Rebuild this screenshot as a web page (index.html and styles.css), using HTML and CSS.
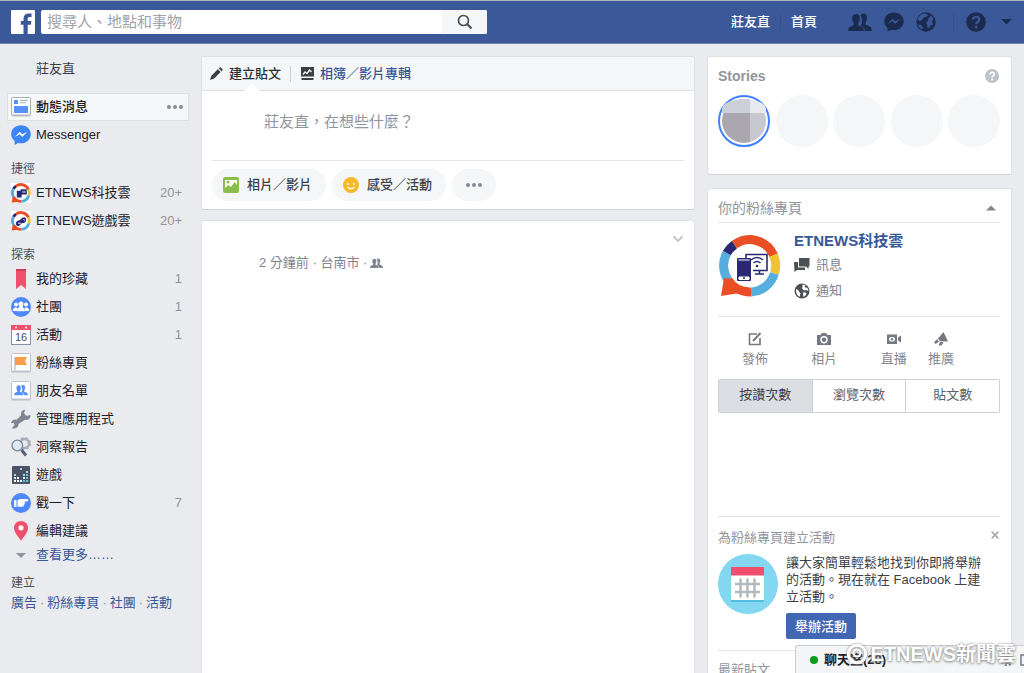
FILE: index.html
```
<!DOCTYPE html>
<html lang="zh-Hant">
<head>
<meta charset="utf-8">
<title>Facebook</title>
<link rel="stylesheet" href="styles.css">
</head>
<body>
<svg class="defs" aria-hidden="true">
  <symbol id="friends" viewBox="0 0 24 18">
    <path d="M15.500.5c2.600 0 3.600 2 3.500 4.600-.1 2.200-.8 3.600-1.500 4.400v2.100c1.500.9 5.100 1.700 5.800 3.200.3.700.4 2.100.4 3.200H17c-.2-3-1.600-4-4-5 .8-1.400 1.100-3.200 1.100-5.400 0-2-.6-3.700-1.500-4.800.6-1.500 1.400-2.300 2.900-2.300z"/>
    <path d="M8 1c2.800 0 3.900 2 3.800 4.800-.1 2.200-.8 3.600-1.600 4.400v2c1.500.8 4.600 1.500 5.200 2.900.3.700.3 1.800.3 2.900H.3c0-1.100 0-2.200.3-2.900.6-1.400 3.700-2.100 5.200-2.900v-2C5 9.400 4.300 8 4.200 5.800 4.100 3 5.200 1 8 1z"/>
  </symbol>
  <symbol id="etlogo" viewBox="0 0 62 62">
    <g fill="none" stroke-width="9">
      <path d="M15.400 9.700A26 26 0 0 1 54.600 20.200" stroke="#e94e25"/>
      <path d="M54.600 20.200A26 26 0 0 1 55.400 38.500" stroke="#f0c335"/>
      <path d="M55.400 38.500A26 26 0 0 1 32 57" stroke="#55aede"/>
      <path d="M32 57A26 26 0 0 1 9 45" stroke="#e94e25"/>
      <path d="M9 45A26 26 0 0 1 7.800 18" stroke="#55aede"/>
      <path d="M7.800 18A26 26 0 0 1 15.400 9.700" stroke="#2b2873"/>
    </g>
    <path d="M5 43l8 1 8 14-19 3z" fill="#e94e25"/>
  </symbol>
</svg>

<header class="topbar">
  <a class="logo" href="#" aria-label="Facebook"><svg viewBox="0 0 24 24"><rect width="24" height="24" rx="1" fill="#fff"/><path d="M12.500 24v-9.200H9.800V11h2.700V8.700c0-3.300 2-5.200 5-5.200H20.500V7h-1.800c-1.600 0-2 .8-2 2v2h3.700l-.5 3.800h-3.200V24z" fill="#3b5998"/></svg></a>
  <form class="search">
    <input type="text" aria-label="搜尋" placeholder="搜尋人、地點和事物">
    <button type="button" aria-label="搜尋"><svg width="16" height="16" viewBox="0 0 16 16" fill="none" stroke="#4b4f56"><circle cx="6.500" cy="6.500" r="5" stroke-width="1.700"/><path d="M10.300 10.300L14.500 14.500" stroke-width="2.200"/></svg></button>
  </form>
  <nav class="topnav">
    <a href="#">莊友直</a><span class="sep"></span><a href="#">首頁</a>
    <div class="topicons">
      <button aria-label="交友邀請"><svg width="24" height="18"><use href="#friends"/></svg></button>
      <button aria-label="訊息"><svg width="20" height="20" viewBox="0 0 20 20"><path d="M10 .5C4.500.5.3 4.300.3 9.300c0 2.800 1.200 5 3.200 6.600v3.700l3.100-1.900c1 .3 2.200.5 3.400.5 5.500 0 9.700-3.900 9.700-8.900S15.500.5 10 .5z"/><path d="M3.800 11.800L8.600 6.700l2.600 2.500 4.900-2.500-4.800 5.200-2.700-2.600z" fill="#3b5998"/></svg></button>
      <button aria-label="通知"><svg width="20" height="20" viewBox="0 0 20 20"><circle cx="10" cy="10" r="9.700"/><path d="M1.500 7C3 3.500 6 1.500 9 1.500L12.500 3 10 5 7.500 5.500 6 8 3.500 9zM15 3.500l2.500 3-1.500 3 1 3-2.500 1-1.500 2.500-2-.5.500-3-1.500-1.500 2-2 .5-2.500zM2 12.500l3 .5 2 2-1 2.500c-2-1-3.400-2.800-4-5z" fill="#3b5998"/></svg></button>
    </div>
    <span class="sep"></span>
    <button aria-label="說明"><svg width="20" height="20" viewBox="0 0 20 20"><circle cx="10" cy="10" r="9.800"/><path d="M7 7.700c0-4 6.200-3.800 6.200 0 0 2.300-3 2-3 4.300" fill="none" stroke="#3b5998" stroke-width="2.200"/><circle cx="10.200" cy="15" r="1.400" fill="#3b5998"/></svg></button>
    <button aria-label="帳號設定"><svg width="11" height="7" viewBox="0 0 12 8"><path d="M0 1h12L6 7.500z"/></svg></button>
  </nav>
</header>

<div class="page">
  <nav class="sidebar">
    <a class="row profile" href="#">莊友直</a>
    <div class="row active">
      <svg class="ico" viewBox="0 0 20 20"><path d="M.5 3v15.500q0 1 1 1h17q1 0 1-1V3z" fill="#bcc1c9"/><rect x=".5" y=".5" width="19" height="17.500" rx="1" fill="#fff" stroke="#a9afb9"/><rect x="3" y="3" width="4" height="4" fill="#5890ff"/><path d="M9 3.500h8M9 5.800h6" stroke="#aab0ba"/><rect x="3" y="9" width="14" height="7" fill="#5890ff"/></svg>
      <a href="#">動態消息</a><button class="dots" aria-label="更多選項"><i></i><i></i><i></i></button>
    </div>
    <a class="row" href="#"><svg class="ico" viewBox="0 0 20 20"><path d="M10 .3C4.500.3.200 4.100.200 9.200c0 3 1.300 5 3.400 6.700v4l3.300-1.900 3.100.3c5.500 0 9.800-4.100 9.800-9.100S15.500.3 10 .3z" fill="#3d84f7"/><path d="M3.800 11.900L8.700 6.700l2.600 2.500 4.900-2.500-4.900 5.200-2.600-2.600z" fill="#fff"/></svg>Messenger</a>

    <h2>捷徑</h2>
    <a class="row" href="#"><svg class="ico" viewBox="0 0 62 62"><path d="M0 0h62v62H0z" fill="#fff"/><use href="#etlogo"/><path d="M18 24h15v21H18zM30 19h19v17H30z" fill="#2b2873"/><path d="M35 24h10v7H35z" fill="#8b89b8"/></svg>ETNEWS科技雲<span class="num">20+</span></a>
    <a class="row" href="#"><svg class="ico" viewBox="0 0 62 62"><path d="M0 0h62v62H0z" fill="#fff"/><use href="#etlogo"/><path d="M16 43c-3-7 3-14 11-14l8-8c7-5 14 0 12 8-1 6-7 10-14 9l-6 6c-4 4-9 4-11-1z" fill="#2b2873"/><path d="M22 38h8M38 26l5 3" stroke="#fff" stroke-width="3"/></svg>ETNEWS遊戲雲<span class="num">20+</span></a>

    <h2>探索</h2>
    <a class="row" href="#"><svg class="ico" viewBox="0 0 20 20"><path d="M5 0h10v20l-5-4-5 4z" fill="#f0506e"/><path d="M5 0h10v2H5z" fill="#cf3f5b"/></svg>我的珍藏<span class="num">1</span></a>
    <a class="row" href="#"><svg class="ico" viewBox="0 0 20 20"><circle cx="10" cy="10" r="10" fill="#4f89f9"/><g fill="#fff"><circle cx="5" cy="7.500" r="2"/><circle cx="15" cy="7.500" r="2"/><path d="M1.800 14q0-3.500 3.200-3.500 1.200 0 1.700 1-.9.900-.9 2.500zM18.200 14q0-3.500-3.200-3.500-1.200 0-1.700 1 .9.900.9 2.500z"/><path d="M10 4.500c3.400 0 2.700 4 1.500 5 0 1.700 2.500 1 2.500 4.700H6c0-3.700 2.500-3 2.500-4.700-1.200-1-1.900-5 1.500-5z"/></g></svg>社團<span class="num">1</span></a>
    <a class="row" href="#"><svg class="ico" viewBox="0 0 20 20"><rect x=".5" y="1" width="19" height="18.500" fill="#fff" stroke="#89919f"/><path d="M0 0h20v5H0z" fill="#f0506e"/><circle cx="5" cy="2.500" r="1" fill="#fff"/><circle cx="15" cy="2.500" r="1" fill="#fff"/><text x="10" y="16" class="date">16</text></svg>活動<span class="num">1</span></a>
    <a class="row" href="#"><svg class="ico" viewBox="0 0 20 20"><path d="M.5 3v16.500h19V3z" fill="#bcc1c9"/><rect x=".5" y=".5" width="19" height="17.500" rx="1" fill="#fff" stroke="#bfc4cb"/><path d="M4 4h12l-2 4 2 4H4z" fill="#f79d4b"/><path d="M4 4v13" stroke="#a5aab3"/></svg>粉絲專頁</a>
    <a class="row" href="#"><svg class="ico" viewBox="0 0 20 20"><path d="M.5 3v16.500h19V3z" fill="#bcc1c9"/><rect x=".5" y=".5" width="19" height="17.500" rx="1" fill="#fff" stroke="#bfc4cb"/><svg x="3" y="3" width="14" height="12" fill="#5890ff"><use href="#friends"/></svg></svg>朋友名單</a>
    <a class="row" href="#"><svg class="ico" viewBox="0 0 20 20"><path d="M14 .5l-1 4 2.500 2.500L19.500 6c.3 3.500-2 5.500-5.500 4.700L7.500 15c0 3.500-3 5-6.800 4.500L3.500 16 2.800 14 0 14c1-3 3-4 5.500-3.300L10 6.500C9.500 3 11 1 14 .5z" fill="#7f8694"/></svg>管理應用程式</a>
    <a class="row" href="#"><svg class="ico" viewBox="0 0 20 20"><circle cx="13.500" cy="6.500" r="4.500" fill="none" stroke="#a9aeb8" stroke-width="2.500"/><circle cx="13.500" cy="6.500" r="5.800" fill="none" stroke="#a9aeb8" stroke-width="1.600" stroke-dasharray="2.300 2.300"/><path d="M10.500 13l4.500 5.500" stroke="#596171" stroke-width="3"/><circle cx="6.300" cy="8.500" r="5.300" fill="#dbe9f7" stroke="#7d8695" stroke-width="1.300"/></svg>洞察報告</a>
    <a class="row" href="#"><svg class="ico" viewBox="0 0 20 20"><rect x="1" y="1" width="18" height="18" rx="1" fill="#4b5263"/><path d="M9 3h2v2H9zM15 6h2v2h-2zM12 9h2v2h-2zM3 9h2v2H3z" fill="#9dd5e8"/><path d="M3 12h2v2H3zM6 12h2v2H6zM12 12h2v2h-2zM3 15h2v2H3zM6 15h2v2H6zM9 15h2v2H9z" fill="#fff"/><path d="M15 9h2v2h-2zM15 12h2v2h-2zM12 15h2v2h-2zM15 15h2v2h-2z" fill="#66c4df"/></svg>遊戲</a>
    <a class="row" href="#"><svg class="ico" viewBox="0 0 20 20"><circle cx="10" cy="10" r="10" fill="#4f89f9"/><path d="M3 7h2.500v7H3zM6.500 7.500L9 6h7.500q1.500 1.200 0 2.400h-3q1 1 .2 1.900.3 1.200-.8 1.800 0 1.200-1.200 1.600H6.500z" fill="#fff"/></svg>戳一下<span class="num">7</span></a>
    <a class="row" href="#"><svg class="ico" viewBox="0 0 20 20"><path d="M10 0c4.200 0 7 3 7 7 0 5-5 9-7 13C8 16 3 12 3 7c0-4 2.800-7 7-7z" fill="#f0506e"/><circle cx="10" cy="6.800" r="2.600" fill="#fff"/></svg>編輯建議</a>
    <a class="row more" href="#"><svg class="ico" viewBox="0 0 20 20"><path d="M5 8h10l-5 5z" fill="#90949c"/></svg>查看更多……</a>
    <h2 class="create">建立</h2>
    <p class="links"><a href="#">廣告</a><span>·</span><a href="#">粉絲專頁</a><span>·</span><a href="#">社團</a><span>·</span><a href="#">活動</a></p>
  </nav>

  <main class="feed">
    <section class="card composer">
      <div class="tabs">
        <button class="tab current"><svg width="13" height="13" viewBox="0 0 14 14" fill="#3a3e45"><path d="M0 14l1.500-4.500L8.500 2.500l3 3-7 7zM9.500 1.500l1-1q.6-.5 1.200 0L13.500 2.300q.5.600 0 1.200l-1 1z"/></svg>建立貼文</button>
        <button class="tab album"><svg width="13" height="13" viewBox="0 0 13 13"><path d="M0 0h13v9.500H0zM.5 11h12v2H.5z" fill="#3a3e45"/><path d="M2 7.500l2-2.500 2 1.500 2.500-3.500 2 2" fill="none" stroke="#f5f6f7" stroke-width="1.300"/></svg>相簿／影片專輯</button>
      </div>
      <textarea aria-label="建立貼文" rows="1" placeholder="莊友直，在想些什麼？"></textarea>
      <div class="pills">
        <button><svg width="16" height="16" viewBox="0 0 16 16"><rect width="16" height="16" rx="2" fill="#89be4c"/><path d="M2 3h12v10H2z" fill="#fff"/><circle cx="5" cy="5" r="1.500" fill="#89be4c"/><path d="M2 11l3-3 3 2 3.500-5L14 8v5H2z" fill="#89be4c"/></svg>相片／影片</button>
        <button><svg width="16" height="16" viewBox="0 0 16 16"><circle cx="8" cy="8" r="8" fill="#f7b928"/><circle cx="5" cy="7" r="1" fill="#fff"/><circle cx="11" cy="7" r="1" fill="#fff"/><path d="M4.500 10q3.500 3.500 7 0" fill="none" stroke="#fff" stroke-width="1.300"/></svg>感受／活動</button>
        <button class="dots" aria-label="更多"><i></i><i></i><i></i></button>
      </div>
    </section>
    <article class="card post">
      <p class="meta">2 分鐘前 · 台南市 · <svg width="13" height="10" fill="#7f848e"><use href="#friends"/></svg></p>
      <button class="chev" aria-label="貼文選項"><svg width="12" height="8" viewBox="0 0 12 8"><path d="M1.500 1.500L6 6l4.500-4.500" fill="none" stroke="#c0c4cb" stroke-width="1.800"/></svg></button>
    </article>
  </main>

  <aside class="right">
    <section class="card stories">
      <div class="head"><h3>Stories</h3><button aria-label="說明"><svg width="14" height="14" viewBox="0 0 20 20"><circle cx="10" cy="10" r="10" fill="#bec3c9"/><path d="M7 7.700c0-4 6.200-3.800 6.200 0 0 2.300-3 2-3 4.300" fill="none" stroke="#fff" stroke-width="2.300"/><circle cx="10.200" cy="15" r="1.500" fill="#fff"/></svg></button></div>
      <div class="bubbles"><span class="me"></span><span></span><span></span><span></span><span></span></div>
    </section>

    <section class="card pages">
      <div class="head line"><h3>你的粉絲專頁</h3><button aria-label="收合"><svg width="10" height="6" viewBox="0 0 10 6"><path d="M0 5.500h10L5 .5z" fill="#7f8491"/></svg></button></div>
      <div class="fan">
        <svg width="62" height="62" viewBox="0 0 62 62"><use href="#etlogo"/><g fill="none" stroke="#2b2873" stroke-width="1.600"><path d="M27 23v-3.500h21v16H34M36 39h9M40.500 36v3"/><path d="M32 25q6-5 12 0M34.500 28q3.500-3 7 0"/></g><circle cx="38" cy="31" r="1.300" fill="#2b2873"/><rect x="18" y="23" width="14" height="23" rx="1" fill="#2b2873"/><path d="M19.500 25h11M20 42h10v2.500H20z" stroke="#fff" fill="#fff"/><circle cx="25" cy="43" r="1" fill="#2b2873"/></svg>
        <div class="faninfo">
          <a class="fanname" href="#">ETNEWS科技雲</a>
          <a href="#"><svg width="16" height="14" viewBox="0 0 16 14" fill="#4b4f56"><path d="M5 0h10.500v8.500H14.500V11L12 8.500H5z"/><path d="M0 4h4v5.500h7V12H3l-2.500 2z"/></svg>訊息</a>
          <a href="#"><svg width="16" height="16" viewBox="0 0 16 16"><circle cx="8" cy="8" r="7.500" fill="#4b4f56"/><path d="M8.500 1.500l3 .5-1 2 3 1 1 3-2.500-1-2 .5-2-2 .5-2zM2 6l2 1 2.500 3.500-1 3.500C3 12.500 1.500 9.500 2 6zM9.500 9l3 1-.5 2-2.500 2-.5-3z" fill="#fff"/></svg>通知</a>
        </div>
      </div>
      <div class="actions">
        <button><svg width="14" height="14" viewBox="0 0 14 14" fill="none" stroke="#747880" stroke-width="1.600"><path d="M9 2H1.500v10.500H12V6"/><path d="M5 9l7.500-8" stroke-width="2"/></svg>發佈</button>
        <button><svg width="14" height="14" viewBox="0 0 14 14"><path d="M0 3h3.500L5 1h4l1.500 2H14v10H0z" fill="#747880"/><circle cx="7" cy="7.800" r="3" fill="none" stroke="#fff" stroke-width="1.400"/></svg>相片</button>
        <button><svg width="14" height="14" viewBox="0 0 14 14"><path d="M0 2.500h10v9.500H0zM11 5.500l3-2v7l-3-2z" fill="#747880"/><ellipse cx="5" cy="7.200" rx="3" ry="2.300" fill="#fff"/><circle cx="5" cy="7.200" r="1.200" fill="#747880"/></svg>直播</button>
        <button><svg width="14" height="14" viewBox="0 0 14 14"><path d="M9.500 0L14 9.500l-8-.3L4 6.500zM3.300 7.200l1.700 2.500L1.500 12 0 10zM6 10h3.500l-2 3.500H4.500z" fill="#747880"/></svg>推廣</button>
      </div>
      <div class="seg"><button class="on">按讚次數</button><button>瀏覽次數</button><button>貼文數</button></div>
      <div class="promo">
        <div class="promohead"><h4>為粉絲專頁建立活動</h4><button aria-label="關閉"><svg width="8" height="8" viewBox="0 0 8 8"><path d="M.7.7l6.600 6.600M7.300.7L.7 7.300" stroke="#a9adb5" stroke-width="1.800"/></svg></button></div>
        <div class="promobody">
          <svg width="60" height="60" viewBox="0 0 60 60"><circle cx="30" cy="30" r="30" fill="#84d7f0"/><path d="M13 44h33v4H13z" fill="#55bce0"/><path d="M13 13h33v33H13z" fill="#fff"/><path d="M13 13h33v8.500H13z" fill="#f0506e"/><path d="M22.500 24.500v19M29.500 24.500v19M36.500 24.500v19M17 30h25M17 38h25" stroke="#b3b7be" stroke-width="2.400"/></svg>
          <div><p>讓大家簡單輕鬆地找到你即將舉辦的活動。現在就在 Facebook 上建立活動。</p><button class="primary">舉辦活動</button></div>
        </div>
      </div>
      <h4 class="latest">最新貼文</h4>
    </section>
  </aside>
</div>

<div class="chat">
  <span class="online"></span><b>聊天室(28)</b>
  <svg class="gear" width="14" height="14" viewBox="0 0 14 14" fill="none" stroke="#737984"><circle cx="7" cy="7" r="3" stroke-width="2"/><circle cx="7" cy="7" r="5.300" stroke-width="2" stroke-dasharray="2 2.160"/></svg>
  <svg width="4" height="12" viewBox="0 0 4 12"><path d="M4 1H1v10h3" fill="none" stroke="#737984" stroke-width="1.500"/></svg>
</div>
<div class="watermark"><svg width="22" height="22" viewBox="0 0 22 22" fill="none" stroke="#fff"><circle cx="11" cy="11" r="8.800" stroke-width="3"/><circle cx="11" cy="10" r="3.500" stroke-width="2"/><path d="M4 20l4-3" stroke-width="3"/></svg><span>ETNEWS新聞雲</span></div>
</body>
</html>
```
FILE: styles.css
```
* { box-sizing: border-box; }
body {
  margin: 0;
  height: 100vh;
  overflow: hidden;
  display: flex;
  flex-direction: column;
  background: #e9ebee;
  color: #1d2129;
  font: 13px/20px "Liberation Sans", "Noto Sans CJK TC", sans-serif;
}
.defs { position: absolute; width: 0; height: 0; }
svg { flex: none; display: block; }
a { color: inherit; text-decoration: none; }
button { margin: 0; padding: 0; border: 0; background: none; font: inherit; color: inherit; display: flex; align-items: center; justify-content: center; }
h2, h3, h4, p { margin: 0; font-size: 13px; font-weight: 400; }

.topbar {
  flex: none;
  display: flex;
  align-items: center;
  height: 44px;
  padding: 0 12px 1px 11px;
  background: #3b5998;
  border-top: 1px solid #adb4c2;
  border-bottom: 1px solid #7285ae;
}
.logo svg { width: 24px; height: 24px; }
.search { display: flex; flex: 0 1 446px; height: 24px; margin-left: 6px; background: #fff; border-radius: 2px; overflow: hidden; }
.search input { flex: 1; min-width: 0; border: 0; padding: 0 6px; outline: 0; background: none; font: 15px/24px "Liberation Sans", "Noto Sans CJK TC", sans-serif; }
.search input::placeholder { color: #a0a3a9; opacity: 1; }
.search button { width: 45px; background: #f5f6f7; }
.topnav { display: flex; align-items: center; margin-left: auto; color: #fff; font-weight: 500; fill: #1b2b50; }
.sep { width: 1px; height: 18px; margin: 0 10px; background: #35508a; }
.topicons { display: flex; gap: 12px; margin: 0 7px 0 31px; }
.topnav > .sep + button { margin: 0 15px 0 2px; }

.page { flex: 1; min-height: 0; display: flex; gap: 12px; padding: 12px 12px 0 7px; }
.sidebar { flex: 0 0 182px; margin-top: -1px; }
.row { display: flex; align-items: center; gap: 5px; height: 28px; padding: 0 7px 0 4px; }
.profile { padding-left: 29px; margin-bottom: 10px; color: #3a3e46; }
.active { background: #f6f7f9; border: 1px solid #dddfe2; padding: 0 5px 0 3px; font-weight: 500; }
.ico { width: 20px; height: 20px; }
.num { margin-left: auto; color: #90949c; }
.date { font: 11px "Liberation Sans", sans-serif; fill: #4b4f56; text-anchor: middle; }
.dots { gap: 2px; margin-left: auto; }
.dots i { width: 4px; height: 4px; border-radius: 50%; background: #848a96; }
.sidebar h2 { margin-top: 10px; padding-left: 4px; font-size: 12px; color: #4b4f56; }
.row.more { height: 20px; color: #385898; }
.sidebar h2.create { margin-top: 8px; }
.links { display: flex; gap: 3px; padding-left: 4px; color: #90949c; white-space: nowrap; }
.links a { color: #385898; }

.card { background: #fff; border: 1px solid #dfe1e6; border-bottom-color: #d0d3da; border-radius: 3px; }
.feed { flex: 1; min-width: 0; display: flex; flex-direction: column; gap: 10px; }
.tabs { display: flex; align-items: center; height: 34px; padding: 0 8px; background: #f5f6f7; border-bottom: 1px solid #dddfe2; border-radius: 3px 3px 0 0; }
.tab { gap: 6px; font-weight: 500; height: 34px; }
.current { position: relative; color: #2a2e36; }
.current::after { content: ""; position: absolute; left: 34px; bottom: 0; border: 8px solid transparent; border-top: 0; border-bottom-color: #fff; }
.album { height: 16px; margin-left: 9px; padding-left: 10px; border-left: 1px solid #ccd0d5; color: #385898; }
.composer textarea { display: block; width: 100%; height: 69px; padding: 19px 62px; border: 0; outline: 0; resize: none; background: none; font: 15px/24px "Liberation Sans", "Noto Sans CJK TC", sans-serif; }
.composer textarea::placeholder { color: #90949c; opacity: 1; }
.pills { display: flex; gap: 6px; margin: 0 10px; padding: 8px 0; border-top: 1px solid #e5e5e9; }
.pills button { height: 32px; gap: 8px; padding: 0 14px 0 11px; border-radius: 16px; background: #f5f6f7; color: #3c4048; font-weight: 500; }
.pills .dots { width: 44px; gap: 2px; margin: 0; padding: 0; }
.post { flex: 1; display: flex; justify-content: space-between; align-items: flex-start; padding: 14px 10px 0 57px; border-bottom: 0; border-radius: 3px 3px 0 0; }
.meta { display: flex; align-items: center; gap: 3px; margin-top: 18px; color: #7f848e; }

.right { flex: 0 0 305px; display: flex; flex-direction: column; gap: 13px; }
.right .card { flex: none; padding: 0 11px 0 10px; }
.head { display: flex; align-items: center; justify-content: space-between; }
.head h3 { font-size: 14px; color: #90949c; }
.stories { height: 119px; }
.stories .head { height: 38px; }
.stories .head button { padding-right: 1px; }
.stories h3 { font-weight: 700; }
.bubbles { display: flex; justify-content: space-between; }
.bubbles span { width: 52px; height: 52px; border-radius: 50%; background: #f5f6f7; }
.bubbles .me { border: 2px solid #4080ff; padding: 2px; background: linear-gradient(90deg, #aaa7ae 64%, #c8c9d0 64%) content-box, #fff; }
.bubbles .me::before { content: ""; display: block; height: 14px; border-radius: 44px 44px 0 0 / 20px 20px 0 0; background: linear-gradient(90deg, #cbd0d9 64%, #e7eaf0 64%); }
.line { height: 34px; border-bottom: 1px solid #e5e6ea; padding-top: 4px; }
.line button { padding-right: 4px; }
.fan { display: flex; gap: 13px; height: 94px; padding: 12px 0 0 1px; border-bottom: 1px solid #e5e6ea; }
.faninfo { display: flex; flex-direction: column; margin-top: -5px; color: #7f848e; }
.faninfo a { display: flex; align-items: center; gap: 6px; height: 26px; }
.faninfo .fanname { height: 22px; font-size: 15px; font-weight: 700; color: #365899; }
.actions { display: flex; height: 62px; padding: 15px 46px 0 24px; justify-content: space-between; align-items: flex-start; color: #858991; }
.actions button { flex-direction: column; gap: 3px; }
.actions button:nth-child(2), .actions button:nth-child(3) { margin-left: 22px; }
.seg { display: flex; height: 34px; border: 1px solid #ccd0d5; border-radius: 2px; color: #5d6169; }
.seg button { flex: 1; border-left: 1px solid #ccd0d5; padding-bottom: 2px; }
.seg button:first-child { border-left: 0; }
.seg .on { background: #dcdee3; color: #3c4048; }
.promo { margin-top: 103px; padding-top: 11px; border-top: 1px solid #e0e1e5; height: 135px; border-bottom: 1px solid #e5e6ea; }
.promohead { display: flex; justify-content: space-between; height: 23px; }
.promohead button { align-self: flex-start; margin-top: 3px; padding-right: 1px; }
h4 { color: #90949c; }
.promobody { display: flex; gap: 8px; line-height: 17px; color: #3c4048; }
.promobody > svg { margin-top: 3px; }
.promobody > div { max-width: 200px; margin-top: 3px; }
.primary { height: 26px; margin-top: 8px; padding: 0 9px; border-radius: 2px; background: #4267b2; color: #fff; font-weight: 500; }
.latest { padding-top: 9px; }

.chat { position: absolute; right: 0; bottom: 0; width: 229px; height: 28px; display: flex; align-items: center; gap: 6px; padding-left: 14px; background: #f4f5f6; border: 1px solid #c9ccd2; border-width: 1px 0 0 1px; border-radius: 3px 0 0 0; }
.chat b { font-weight: 700; }
.online { width: 8px; height: 8px; border-radius: 50%; background: #0a9d1c; }
.gear { margin-left: auto; }
.watermark { position: absolute; right: 8px; bottom: 5px; display: flex; align-items: center; gap: 2px; color: #fff; font: 700 20px/28px "Liberation Sans", "Noto Sans CJK TC", sans-serif; text-shadow: 0 0 2px #888, 0 1px 3px #888; white-space: nowrap; }
.watermark svg { filter: drop-shadow(0 0 1px #777); }
```
